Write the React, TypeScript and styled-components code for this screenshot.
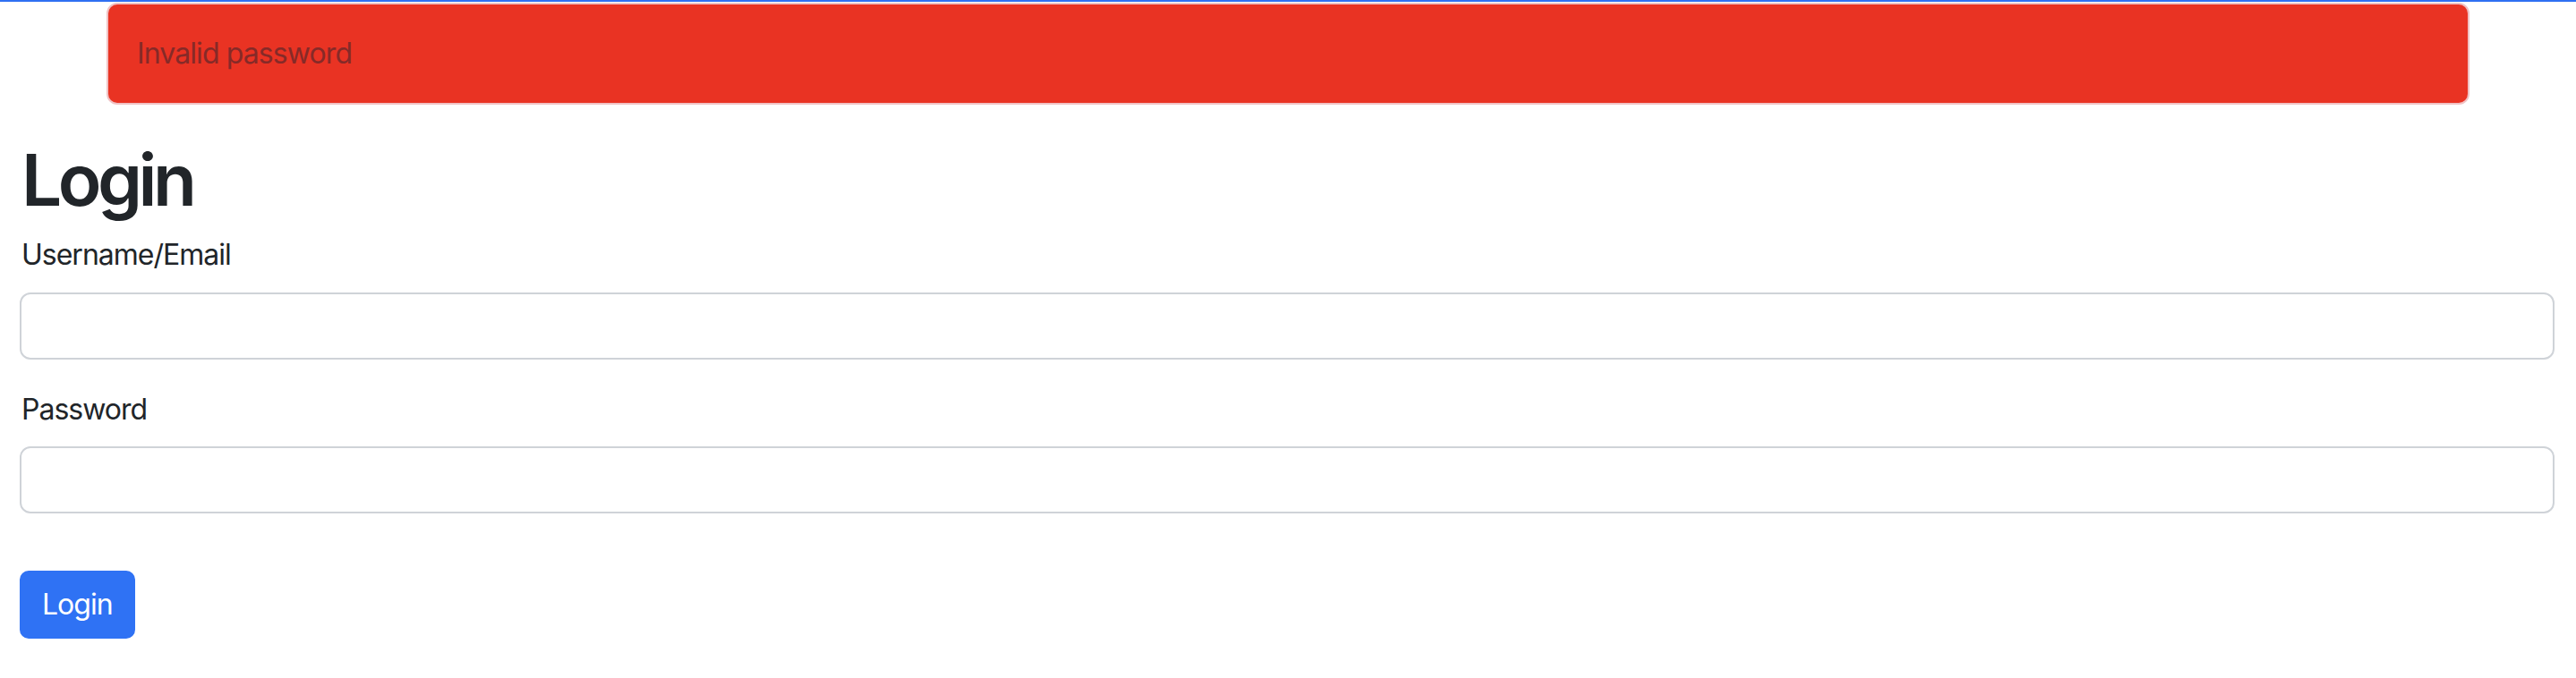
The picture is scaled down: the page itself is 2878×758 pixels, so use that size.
import React from "react";
import styled, { createGlobalStyle } from "styled-components";

const GlobalStyle = createGlobalStyle`
  html, body { margin: 0; padding: 0; background: #ffffff; }
  body {
    font-family: Inter, "Noto Sans", "Liberation Sans", sans-serif;
    color: #212529;
  }
  * { box-sizing: border-box; }
`;

const TopLine = styled.div`
  height: 2px;
  background: #2f6ff2;
`;

const AlertWrap = styled.div`
  width: 2640px;
  margin: 1px auto 0;
`;

const Alert = styled.div`
  background: #e93323;
  border: 2px solid #f0c2c4;
  border-radius: 12px;
  padding: 31px 32px;
  font-size: 32px;
  line-height: 48px;
  color: #862a28;
  letter-spacing: -0.9px;
`;

const Main = styled.main`
  padding: 36px 24px 0 22px;
`;

const Heading = styled.h1`
  margin: 0 0 12px 2px;
  font-size: 80px;
  font-weight: 600;
  line-height: 96px;
  color: #212529;
  letter-spacing: -4.5px;
`;

const Field = styled.div<{ $gapBelow: number }>`
  display: flex;
  flex-direction: column;
  margin-bottom: ${(p) => p.$gapBelow}px;
`;

const Label = styled.label<{ $gap: number }>`
  font-size: 32px;
  line-height: 48px;
  margin: 0 0 ${(p) => p.$gap}px 2px;
  color: #212529;
  letter-spacing: -1px;
`;

const Input = styled.input`
  width: 100%;
  height: 75px;
  border: 2px solid #cfd3d8;
  border-radius: 12px;
  padding: 12px 24px;
  font-size: 32px;
  font-family: inherit;
  background: #ffffff;
  outline: none;
`;

const Button = styled.button`
  height: 76px;
  padding: 12px 23px;
  border: 2px solid #2f72f4;
  border-radius: 10px;
  background: #2f72f4;
  color: #ffffff;
  font-family: inherit;
  font-size: 32px;
  line-height: 48px;
  letter-spacing: -1px;
  cursor: pointer;
`;

export default function App() {
  return (
    <>
      <GlobalStyle />
      <TopLine />
      <AlertWrap>
        <Alert role="alert">Invalid password</Alert>
      </AlertWrap>
      <Main>
        <Heading>Login</Heading>
        <form onSubmit={(e) => e.preventDefault()}>
          <Field $gapBelow={32}>
            <Label $gap={18} htmlFor="user">Username/Email</Label>
            <Input id="user" type="text" />
          </Field>
          <Field $gapBelow={64}>
            <Label $gap={17} htmlFor="pass">Password</Label>
            <Input id="pass" type="password" />
          </Field>
          <Button type="submit">Login</Button>
        </form>
      </Main>
    </>
  );
}
